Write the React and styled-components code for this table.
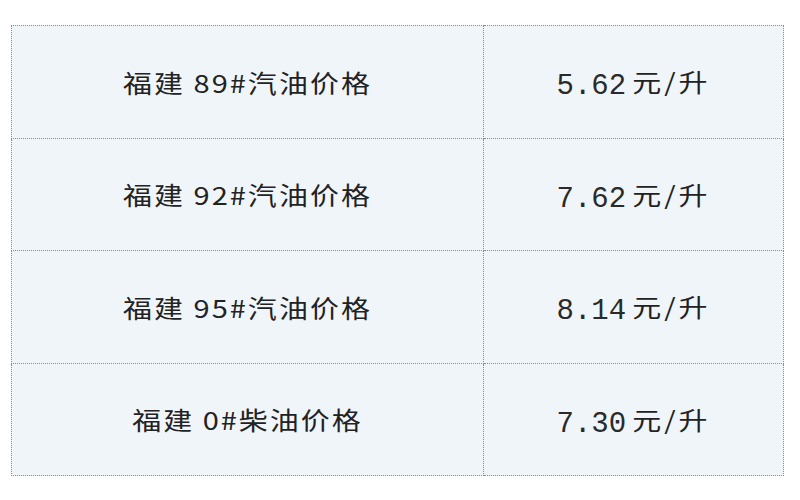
import React from "react";
import styled, { createGlobalStyle } from "styled-components";

const GlobalStyle = createGlobalStyle`
  html, body {
    margin: 0;
    padding: 0;
    background: #ffffff;
  }
`;

const rows = [
  { name: "福建 89#汽油价格", price: "5.62", unit: "元/升" },
  { name: "福建 92#汽油价格", price: "7.62", unit: "元/升" },
  { name: "福建 95#汽油价格", price: "8.14", unit: "元/升" },
  { name: "福建 0#柴油价格", price: "7.30", unit: "元/升" },
];

export default function App() {
  return (
    <>
      <GlobalStyle />
      <Page>
        <PriceTable>
          <tbody>
            {rows.map((r) => (
              <tr key={r.name}>
                <NameCell>
                  <Squash>{r.name}</Squash>
                </NameCell>
                <PriceCell>
                  <PriceLine>
                    <Num>{r.price}</Num>
                    <Unit>{r.unit}</Unit>
                  </PriceLine>
                </PriceCell>
              </tr>
            ))}
          </tbody>
        </PriceTable>
      </Page>
    </>
  );
}

const Page = styled.div`
  width: 800px;
  height: 500px;
  padding: 25px 0 0 11px;
  box-sizing: border-box;
`;

const PriceTable = styled.table`
  border-collapse: collapse;
  width: 773px;
  table-layout: fixed;
  background: #f0f5fa;
  border: 1px dotted #8c8c8c;
  & td {
    height: 111.5px;
    border: 1px dotted #8c8c8c;
    text-align: center;
    vertical-align: middle;
    padding: 0;
    color: #222222;
  }
`;

const NameCell = styled.td`
  width: 471px;
  font-family: "Noto Sans CJK SC", "Noto Sans", sans-serif;
  font-size: 29px;
  letter-spacing: 2px;
`;

const PriceCell = styled.td`
  font-family: "Noto Sans CJK SC", sans-serif;
  font-size: 29px;
`;

const PriceLine = styled.span`
  display: inline-flex;
  align-items: baseline;
  gap: 6px;
  white-space: nowrap;
`;

const Squash = styled.span`
  display: inline-block;
  transform: scaleY(0.85);
`;

const Num = styled.span`
  font-family: "Liberation Mono", monospace;
  font-size: 29px;
  color: #2a2a2a;
`;

const Unit = styled(Squash)`
  letter-spacing: 3px;
`;
